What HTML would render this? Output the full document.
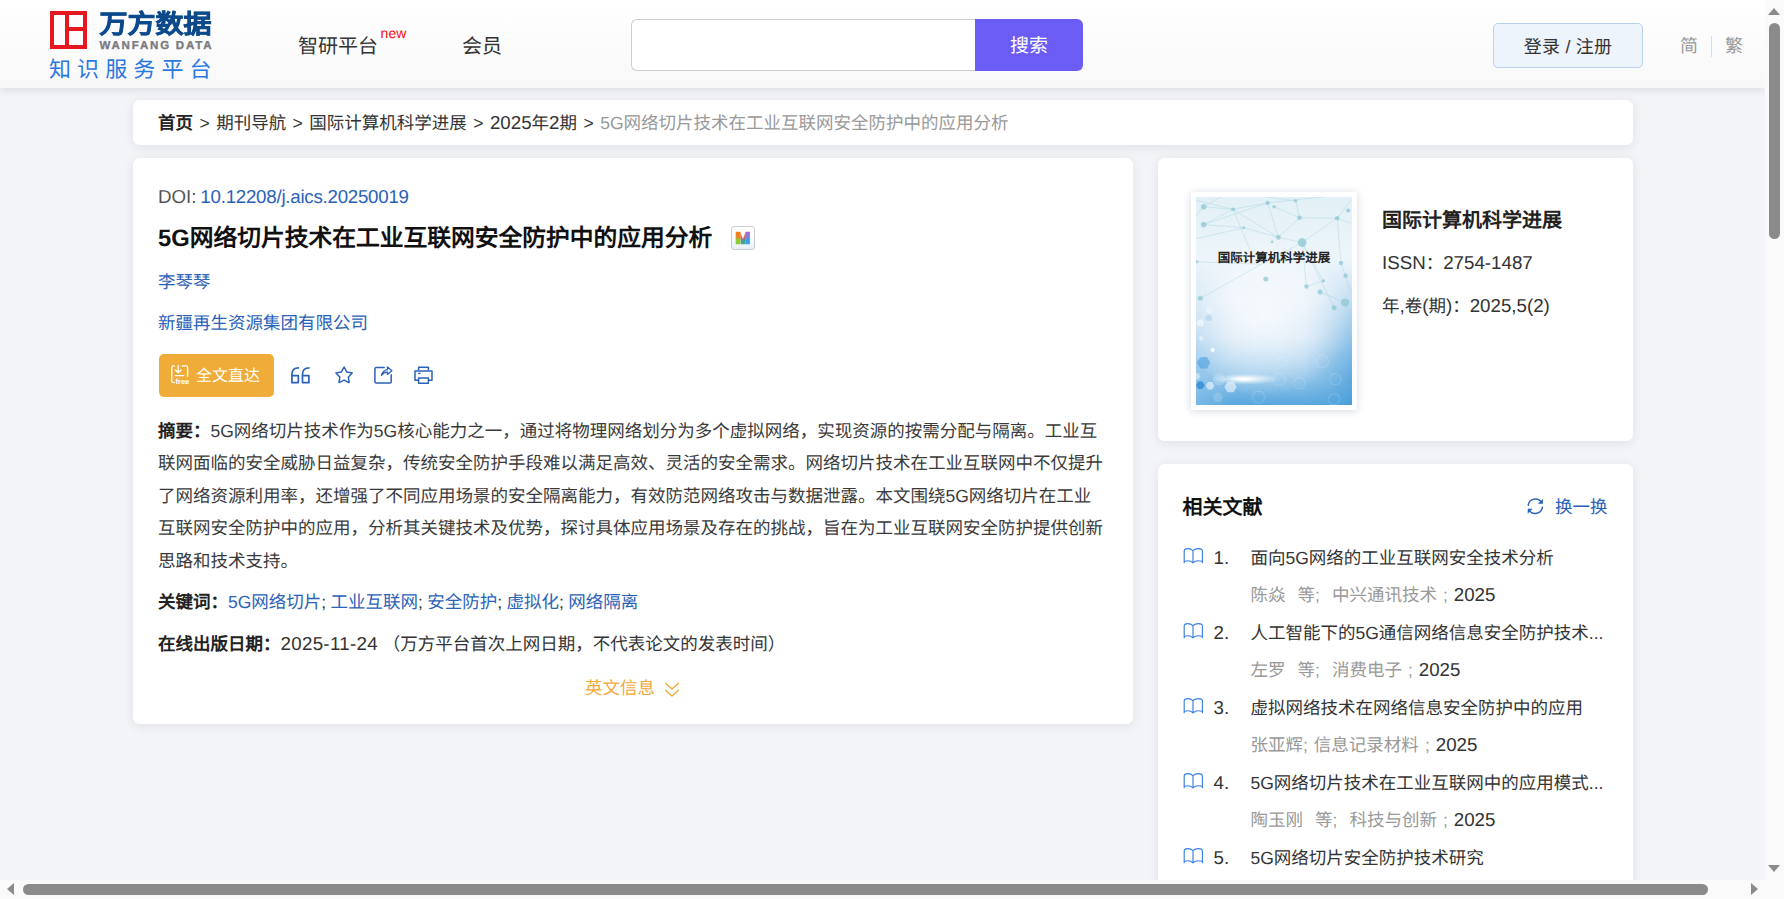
<!DOCTYPE html>
<html lang="zh-CN">
<head>
<meta charset="utf-8">
<title>5G网络切片技术在工业互联网安全防护中的应用分析</title>
<style>
html,body{margin:0;padding:0;}
body{width:1784px;height:899px;overflow:hidden;position:relative;background:#f3f4f8;font-family:"Liberation Sans",sans-serif;color:#222;font-size:17.5px;text-rendering:geometricPrecision;}
*{box-sizing:border-box;}
.abs{position:absolute;white-space:nowrap;}
a{text-decoration:none;color:inherit;}
/* header */
#header{position:absolute;left:0;top:0;width:1765px;height:88px;background:linear-gradient(#ffffff,#f8f8f8);box-shadow:0 2px 8px rgba(0,0,0,.10);}
#logo-sq{position:absolute;left:50px;top:11px;width:37px;height:38px;border:4px solid #e8161f;}
#logo-sq i{position:absolute;background:#e8161f;display:block;}
#logo-cn{left:99.5px;top:9.4px;font-size:28px;line-height:32px;font-weight:900;color:#0c4a8c;letter-spacing:0px;-webkit-text-stroke:.7px #0c4a8c;transform:scaleY(.93);transform-origin:0 50%;}
#logo-en{left:99.5px;top:38.8px;font-size:11.5px;line-height:14px;font-weight:bold;color:#7a7b7e;letter-spacing:1.8px;-webkit-text-stroke:.35px #7a7b7e;}
#logo-sub{left:49px;top:56.6px;font-size:22px;line-height:26px;color:#2a78e2;letter-spacing:6.1px;}
.nav{font-size:20px;line-height:28px;color:#333;top:32.5px;}
#new{left:380.6px;top:25px;font-size:14px;line-height:16px;color:#f80c10;}
#sbox{position:absolute;left:631.4px;top:19px;width:344.6px;height:52px;border:1px solid #cdcdcd;border-right:none;border-radius:6px 0 0 6px;background:#fff;}
#sbtn{position:absolute;left:975px;top:19px;width:108px;height:52px;border-radius:0 6px 6px 0;background:#6a5cf5;color:#fff;font-size:19px;line-height:56px;text-align:center;}
#login{position:absolute;left:1493px;top:23px;width:150px;height:45px;border:1px solid #b9d0ee;border-radius:5px;background:#eef4fc;color:#333;font-size:18px;line-height:46px;text-align:center;letter-spacing:.2px;}
.lang{font-size:18px;line-height:24px;color:#999;top:34px;}
#langsep{position:absolute;left:1711px;top:36px;width:1px;height:21px;background:#ddd;}
/* cards */
.card{position:absolute;background:#fff;border-radius:6.5px;box-shadow:0 2px 11px rgba(30,35,50,.085);}
#crumb{left:133px;top:100px;width:1500px;height:45px;}
#crumb .abs{left:25px;top:10px;font-size:17.5px;line-height:25px;color:#333;word-spacing:1.6px;}
#crumb b{color:#222;}
#crumb .cur{color:#999;}
#main{left:133px;top:158px;width:1000px;height:566px;}
#side1{left:1158px;top:158px;width:475px;height:283px;}
#side2{left:1158px;top:463.7px;width:475px;height:440px;}
.blue{color:#2a62b8;}
/* main content (coordinates relative to page via #main offset) */
.l{font-size:107%;}
#main .abs{left:25px;}
#doi{top:25px;line-height:28px;color:#555;}
#title{top:63.3px;font-size:23.75px;line-height:36px;font-weight:bold;color:#111;}
#micon{position:absolute;left:598.3px;top:68.3px;width:23.6px;height:23.6px;border:1.5px solid #cbcccf;border-radius:3px;background:linear-gradient(#fff 30%,#e9f0fa);overflow:hidden;}
#author{top:109.7px;line-height:28px;}
#org{top:150.7px;line-height:28px;}
#ftbtn{position:absolute;left:26px;top:196px;width:115px;height:43px;border-radius:5px;background:#f0ac38;}
#ftbtn span{position:absolute;left:37px;top:10.5px;font-size:16px;line-height:24px;color:#fff;white-space:nowrap;}
.ico{position:absolute;}
#abs-t div{height:32.5px;line-height:32.5px;white-space:nowrap;width:950px;color:#3a3a3a;}
#abs-t{top:256.8px;}
#main b{color:#222;}
#kw{top:430px;line-height:28px;color:#333;word-spacing:-.5px;}
#pub{top:472px;line-height:28px;color:#333;}
#eng{top:516px;line-height:28px;color:#f0a93a;}


/* side 1 */
#cover{position:absolute;left:33px;top:34px;width:166px;height:218px;background:#fff;box-shadow:0 1px 8px rgba(60,80,120,.22);}
#cover svg{position:absolute;left:5px;top:5px;}
#cover-t{position:absolute;left:5px;top:57.3px;width:156px;text-align:center;font-size:12.5px;line-height:18px;font-weight:bold;color:#222;white-space:nowrap;letter-spacing:0;}
#jt{left:224px;top:47.8px;font-size:20px;line-height:30px;font-weight:bold;color:#222;}
#issn{left:224px;top:91px;line-height:28px;color:#333;}
#vol{left:224px;top:133.7px;line-height:28px;color:#333;}
/* side 2 */
#rel-h{left:24.5px;top:29.7px;font-size:20px;line-height:30px;font-weight:bold;color:#111;}
#rel-r{left:397px;top:29px;line-height:28px;}
.ri{position:absolute;left:0;width:475px;height:75px;}
.ri .n{left:55.5px;top:1px;line-height:30px;color:#333;}
.ri .t{left:92.5px;top:1px;line-height:30px;color:#333;width:358px;overflow:hidden;}
.ri .s{left:92.5px;top:37.8px;line-height:30px;color:#999;word-spacing:1.15px;}
.ri .s em{font-style:normal;color:#333;}
.ri svg{position:absolute;left:24px;top:4px;}
/* scrollbars */
#vsb{position:absolute;left:1765px;top:0;width:19px;height:899px;background:#fafafa;}
#hsb{position:absolute;left:0;top:880px;width:1784px;height:19px;background:#fafafa;}
.thumb{position:absolute;background:#8b8b8b;border-radius:6px;}
.tri{position:absolute;width:0;height:0;}
</style>
</head>
<body>
<div id="header">
  <div id="logo-sq"><i style="left:11px;top:0;width:4px;height:30px"></i><i style="left:15px;top:12px;width:14px;height:4px"></i></div>
  <div class="abs" id="logo-cn">万方数据</div>
  <div class="abs" id="logo-en">WANFANG DATA</div>
  <div class="abs" id="logo-sub">知识服务平台</div>
  <div class="abs nav" style="left:298px">智研平台</div>
  <div class="abs" id="new">new</div>
  <div class="abs nav" style="left:462px">会员</div>
  <div id="sbox"></div>
  <div id="sbtn">搜索</div>
  <div id="login">登录 / 注册</div>
  <div class="abs lang" style="left:1680px">简</div>
  <div id="langsep"></div>
  <div class="abs lang" style="left:1725px">繁</div>
</div>

<div class="card" id="crumb">
  <div class="abs"><b>首页</b> &gt; 期刊导航 &gt; 国际计算机科学进展 &gt; <span class="l">2025</span>年<span class="l">2</span>期 &gt; <span class="cur">5G网络切片技术在工业互联网安全防护中的应用分析</span></div>
</div>

<div class="card" id="main">
  <div class="abs" id="doi"><span class="l">DOI:</span> <span class="blue l" style="margin-left:-1px;letter-spacing:-.25px">10.12208/j.aics.20250019</span></div>
  <div class="abs" id="title">5G网络切片技术在工业互联网安全防护中的应用分析</div>
  <div id="micon"><svg width="21" height="21" viewBox="732.1 227.5 21 21" style="position:absolute;left:0;top:0">
    <defs><linearGradient id="m1" x1="0" y1="0" x2="0" y2="1"><stop offset="0" stop-color="#f47a18"/><stop offset=".5" stop-color="#e48a2a"/><stop offset=".62" stop-color="#8fcf2a"/><stop offset="1" stop-color="#8cc63a"/></linearGradient>
    <linearGradient id="m2" x1="0" y1="0" x2="0" y2="1"><stop offset="0" stop-color="#b45fd0"/><stop offset=".45" stop-color="#7a86dc"/><stop offset=".6" stop-color="#3a9be6"/><stop offset="1" stop-color="#3a9be6"/></linearGradient>
    <linearGradient id="m3" x1="0" y1="0" x2="0" y2="1"><stop offset="0" stop-color="#f08a3a"/><stop offset=".5" stop-color="#d8605a"/><stop offset=".7" stop-color="#4a9a96"/><stop offset="1" stop-color="#4aa39a"/></linearGradient></defs>
    <path d="M735.8 232.2H740.6V244.8H735.8Z" fill="url(#m1)"/>
    <path d="M745.6 232.2H750V244.8H745.6Z" fill="url(#m2)"/>
    <path d="M740.2 232.2L743 239.6L745.8 232.2L746 236L745.6 244.8H741V244.8L740.4 236Z" fill="url(#m3)"/>
  </svg></div>
  <div class="abs blue" id="author">李琴琴</div>
  <div class="abs blue" id="org">新疆再生资源集团有限公司</div>
  <div id="ftbtn"><span>全文直达</span></div>

  <svg class="ico" style="left:36px;top:205px" width="24" height="24" viewBox="169 363 24 24" fill="none" stroke="#fff" stroke-width="1.3" stroke-linecap="round" stroke-linejoin="round">
    <path d="M174.5 365.8H173.4Q171.8 365.8 171.8 367.4V381Q171.8 382.6 173.4 382.6H174.3"/>
    <path d="M182 365.8H186Q187.6 365.8 187.6 367.4V376.3"/>
    <path d="M178.2 365.5V372.6M175.3 370L178.2 372.8L181.1 370"/>
    <path d="M175.3 375.6H183.8"/>
    <text x="175.6" y="384.2" font-family="Liberation Sans, sans-serif" font-size="7.6" font-weight="bold" fill="#fff" stroke="none" letter-spacing="-.1">free</text>
  </svg>
  <svg class="ico" style="left:156px;top:207px" width="22" height="20" viewBox="289 365 22 20" fill="none" stroke="#2a62b8" stroke-width="1.7" stroke-linejoin="round">
    <path d="M299 367.8Q291.9 367.6 291.9 374.4V382.6H298.3V375.6H291.9"/>
    <path d="M309.6 367.8Q302.5 367.6 302.5 374.4V382.6H308.9V375.6H302.5"/>
  </svg>
  <svg class="ico" style="left:200px;top:206px" width="22" height="22" viewBox="333 364 22 22" fill="none" stroke="#2a62b8" stroke-width="1.5" stroke-linejoin="round">
    <path d="M344.1 367L346.75 371.96L352.28 372.94L348.38 376.99L349.16 382.56L344.1 380.1L339.04 382.56L339.82 376.99L335.92 372.94L341.45 371.96Z"/>
  </svg>
  <svg class="ico" style="left:239px;top:206px" width="24" height="22" viewBox="372 364 24 22" fill="none" stroke="#2a62b8" stroke-width="1.5" stroke-linejoin="round" stroke-linecap="round">
    <path d="M384.2 367.6H376.4Q374.9 367.6 374.9 369.1V381.4Q374.9 382.9 376.4 382.9H390.2Q391.2 382.9 391.2 381.9V374.8"/>
    <path d="M381.4 375.3Q383 370.3 387.4 369.6V367L391.9 370.7L387.4 374.4V372.1Q384 372 381.4 375.3Z" stroke-width="1.3"/>
  </svg>
  <svg class="ico" style="left:279px;top:206px" width="24" height="22" viewBox="412 364 24 22" fill="none" stroke="#2a62b8" stroke-width="1.5" stroke-linejoin="round">
    <path d="M418.6 370.3V367.2H428.4V370.3"/>
    <path d="M418.6 380.2H415Q415 380.2 415 380.2V370.9H432V380.2H428.4"/>
    <path d="M418.6 377.9H428.4V383.2H418.6Z"/>
    <path d="M418.2 373.4H420.6" stroke-width="1.4"/>
  </svg>
  <svg class="ico" style="left:530px;top:522px" width="18" height="18" viewBox="663 680 18 18" fill="none" stroke="#f0a93a" stroke-width="1.4" stroke-linecap="round" stroke-linejoin="round">
    <path d="M665.6 683.2L672 689L678.4 683.2M665.6 690.3L672 696.1L678.4 690.3"/>
  </svg>
  <div class="abs" id="abs-t">
    <div><b>摘要：</b>5G网络切片技术作为5G核心能力之一，通过将物理网络划分为多个虚拟网络，实现资源的按需分配与隔离。工业互</div>
    <div>联网面临的安全威胁日益复杂，传统安全防护手段难以满足高效、灵活的安全需求。网络切片技术在工业互联网中不仅提升</div>
    <div>了网络资源利用率，还增强了不同应用场景的安全隔离能力，有效防范网络攻击与数据泄露。本文围绕5G网络切片在工业</div>
    <div>互联网安全防护中的应用，分析其关键技术及优势，探讨具体应用场景及存在的挑战，旨在为工业互联网安全防护提供创新</div>
    <div>思路和技术支持。</div>
  </div>
  <div class="abs" id="kw"><b>关键词：</b><span class="blue">5G网络切片</span>; <span class="blue">工业互联网</span>; <span class="blue">安全防护</span>; <span class="blue">虚拟化</span>; <span class="blue">网络隔离</span></div>
  <div class="abs" id="pub"><b>在线出版日期：</b><span class="l" style="letter-spacing:.3px">2025-11-24</span> （万方平台首次上网日期，不代表论文的发表时间）</div>
  <div class="abs" id="eng" style="left:452px">英文信息</div>
</div>

<div class="card" id="side1">
  <div id="cover">
    <svg width="156" height="208" viewBox="0 0 156 208"><defs>
      <linearGradient id="cg" x1="0" y1="0" x2="0" y2="1"><stop offset="0" stop-color="#e2f0f6"/><stop offset=".3" stop-color="#edf5fa"/><stop offset=".5" stop-color="#e6f0f9"/><stop offset=".68" stop-color="#cfe4f5"/><stop offset=".85" stop-color="#9ccaec"/><stop offset="1" stop-color="#58a7dd"/></linearGradient>
      <linearGradient id="ch" x1="0" y1="0" x2="1" y2="0"><stop offset="0" stop-color="#8fc4ea" stop-opacity=".55"/><stop offset=".25" stop-color="#8fc4ea" stop-opacity="0"/><stop offset=".7" stop-color="#5aa9df" stop-opacity="0"/><stop offset="1" stop-color="#3f98d8" stop-opacity=".6"/></linearGradient>
      <linearGradient id="cm" x1="0" y1="0" x2="0" y2="1"><stop offset="0" stop-color="#fff" stop-opacity="1"/><stop offset=".42" stop-color="#fff" stop-opacity="1"/><stop offset=".5" stop-color="#fff" stop-opacity="0"/></linearGradient>
      <linearGradient id="cmg" x1="0" y1="0" x2="0" y2="1"><stop offset=".3" stop-color="#000"/><stop offset=".85" stop-color="#fff"/></linearGradient><mask id="cmask"><rect width="156" height="208" fill="url(#cmg)"/></mask>
      <radialGradient id="cw" cx=".46" cy=".5" r=".5"><stop offset="0" stop-color="#fff" stop-opacity=".75"/><stop offset=".5" stop-color="#fff" stop-opacity=".4"/><stop offset="1" stop-color="#fff" stop-opacity="0"/></radialGradient>
      <radialGradient id="cs" cx=".5" cy=".5" r=".5"><stop offset="0" stop-color="#fff" stop-opacity="1"/><stop offset="1" stop-color="#fff" stop-opacity="0"/></radialGradient>
      <clipPath id="cc"><rect width="156" height="208"/></clipPath>
    </defs>
    <g clip-path="url(#cc)">
    <rect width="156" height="208" fill="url(#cg)"/>
    <rect width="156" height="208" fill="url(#ch)" mask="url(#cmask)"/>
    <ellipse cx="74" cy="120" rx="86" ry="80" fill="url(#cw)"/>
    <g stroke="#8cc4cf" stroke-width=".55" opacity=".55" fill="none"><path d="M7.7 9.7L37.1 12.3"/><path d="M37.1 12.3L71.6 5.9"/><path d="M37.1 12.3L7.7 27.6"/><path d="M7.7 27.6L71.6 5.9"/><path d="M37.1 12.3L53.7 51.9"/><path d="M0.0 3.3L37.1 12.3"/><path d="M37.1 12.3L82.4 40.4"/><path d="M78.0 9.7L103.6 20.7"/><path d="M99.7 3.8L103.6 20.7"/><path d="M103.6 20.7L141.2 21.2"/><path d="M103.6 20.7L82.4 40.4"/><path d="M82.4 40.4L106.1 45.5"/><path d="M106.1 45.5L141.2 21.2"/><path d="M106.1 45.5L110.5 89.5"/><path d="M110.5 89.5L127.4 83.9"/><path d="M4.3 101.3L65.2 67.3"/><path d="M0.0 64.7L65.2 67.3"/><path d="M65.2 67.3L106.1 45.5"/><path d="M71.6 5.9L82.4 40.4"/><path d="M71.6 5.9L126.6 0.0"/><path d="M141.2 21.2L155.2 3.3"/><path d="M141.2 21.2L145.0 66.0"/><path d="M106.1 45.5L138.1 110.7"/><path d="M145.0 66.0L155.2 95.4"/><path d="M99.7 3.8L70.3 0.0"/><path d="M7.7 9.7L0.0 18.7"/><path d="M7.7 9.7L24.3 0.0"/><path d="M124.0 94.9L149.1 105.6"/><path d="M127.4 83.9L106.1 45.5"/><path d="M47.8 30.7L7.7 27.6"/><path d="M47.8 30.7L82.4 40.4"/><path d="M141.2 21.2L155.2 26.3"/><path d="M0.0 41.7L47.8 30.7"/></g>
    <g fill="#8fc8d4" opacity=".75"><circle cx="7.7" cy="9.7" r="2.8"/><circle cx="37.1" cy="12.3" r="1.9"/><circle cx="7.7" cy="27.6" r="2.8"/><circle cx="71.6" cy="5.9" r="2.1"/><circle cx="78.0" cy="9.7" r="1.7"/><circle cx="99.7" cy="3.8" r="1.7"/><circle cx="103.6" cy="20.7" r="2.3"/><circle cx="141.2" cy="21.2" r="2.3"/><circle cx="82.4" cy="40.4" r="2.3"/><circle cx="106.1" cy="45.5" r="4.4"/><circle cx="69.8" cy="82.1" r="2.5"/><circle cx="110.5" cy="89.5" r="2.2"/><circle cx="124.0" cy="94.9" r="2.5"/><circle cx="127.4" cy="83.9" r="1.7"/><circle cx="149.1" cy="105.6" r="4.0"/><circle cx="138.1" cy="110.7" r="2.5"/><circle cx="4.3" cy="101.3" r="2.5"/><circle cx="145.0" cy="66.0" r="2.3"/><circle cx="149.6" cy="78.8" r="2.3"/><circle cx="76.2" cy="44.8" r="1.4"/><circle cx="47.8" cy="30.7" r="1.4"/><circle cx="152.2" cy="13.6" r="2.1"/><circle cx="1.0" cy="64.7" r="1.5"/></g>
    <path d="M8.4 126.1L6.4 129.6L2.3 129.6L0.3 126.1L2.3 122.5L6.4 122.5Z" fill="#fff" opacity="0.55"/><path d="M16.4 121.0L14.6 124.1L11.0 124.1L9.2 121.0L11.0 117.9L14.6 117.9Z" fill="#9fc8ee" opacity="0.45"/><path d="M16.6 113.3L15.0 116.2L11.6 116.2L10.0 113.3L11.6 110.4L15.0 110.4Z" fill="#fff" opacity="0.35"/><path d="M7.4 141.4L6.3 143.4L4.0 143.4L2.8 141.4L4.0 139.4L6.3 139.4Z" fill="#fff" opacity="0.5"/><path d="M14.3 165.7L11.0 171.5L4.3 171.5L1.0 165.7L4.3 160.0L11.0 160.0Z" fill="#3f9adf" opacity="0.55"/><path d="M18.9 152.9L17.8 154.9L15.5 154.9L14.3 152.9L15.5 150.9L17.8 150.9Z" fill="#fff" opacity="0.8"/><path d="M8.7 188.2L6.5 192.0L2.2 192.0L0.0 188.2L2.2 184.5L6.5 184.5Z" fill="#2a86d6" opacity="0.75"/><path d="M18.4 188.7L16.2 192.5L11.9 192.5L9.7 188.7L11.9 185.0L16.2 185.0Z" fill="#fff" opacity="0.55"/><path d="M29.7 182.4L26.3 188.1L19.7 188.1L16.4 182.4L19.7 176.6L26.3 176.6Z" fill="#cfe4f6" opacity="0.35"/><path d="M40.7 190.0L37.6 195.3L31.5 195.3L28.4 190.0L31.5 184.7L37.6 184.7Z" fill="#fff" opacity="0.55"/><path d="M4.3 179.3L2.6 182.4L-1.0 182.4L-2.8 179.3L-1.0 176.2L2.6 176.2Z" fill="#fff" opacity="0.45"/><path d="M26.9 200.3L24.3 204.7L19.2 204.7L16.6 200.3L19.2 195.8L24.3 195.8Z" fill="#b8d8f2" opacity="0.35"/><path d="M9.0 156.8L6.4 161.2L1.3 161.2L-1.3 156.8L1.3 152.3L6.4 152.3Z" fill="#bcdaf4" opacity="0.35"/><g fill="none" stroke="#fff" stroke-width=".5" opacity=".35"><path d="M89.8 182.4L86.4 188.1L79.8 188.1L76.5 182.4L79.8 176.6L86.4 176.6Z"/><path d="M69.3 200.3L66.0 206.0L59.3 206.0L56.0 200.3L59.3 194.5L66.0 194.5Z"/><path d="M109.7 186.2L106.6 191.5L100.5 191.5L97.4 186.2L100.5 180.9L106.6 180.9Z"/><path d="M133.2 164.5L129.9 170.2L123.3 170.2L119.9 164.5L123.3 158.7L129.9 158.7Z"/><path d="M145.5 182.4L142.5 187.7L136.3 187.7L133.2 182.4L136.3 177.0L142.5 177.0Z"/><path d="M144.2 202.3L141.2 207.6L135.0 207.6L132.0 202.3L135.0 197.0L141.2 197.0Z"/><path d="M90.8 164.5L88.2 168.9L83.1 168.9L80.6 164.5L83.1 160.0L88.2 160.0Z"/></g>
    <ellipse cx="50" cy="182" rx="34" ry="5.5" fill="url(#cs)"/>
    <ellipse cx="46" cy="182" rx="14" ry="3" fill="url(#cs)"/>
    </g>
    </svg>
    <div id="cover-t">国际计算机科学进展</div>
  </div>
  <div class="abs" id="jt">国际计算机科学进展</div>
  <div class="abs" id="issn"><span class="l">ISSN</span>：<span class="l">2754-1487</span></div>
  <div class="abs" id="vol">年<span class="l">,</span>卷<span class="l">(</span>期<span class="l">)</span>：<span class="l">2025,5(2)</span></div>
</div>

<div class="card" id="side2">
  <div class="abs" id="rel-h">相关文献</div>
  <svg class="ico" style="left:367px;top:32.3px" width="20" height="20" viewBox="1525 496 20 20" fill="none" stroke="#2a62b8" stroke-width="1.4" stroke-linecap="round">
    <path d="M1528.2 505.3A7.2 7.2 0 0 1 1541.6 502.6"/><path d="M1542.4 507.1A7.2 7.2 0 0 1 1529 509.8"/>
    <path d="M1542.6 499.6V503.4H1538.8Z" fill="#2a62b8" stroke-width=".6" stroke-linejoin="round"/><path d="M1528 512.8V509H1531.8Z" fill="#2a62b8" stroke-width=".6" stroke-linejoin="round"/>
  </svg>
  <div class="abs blue" id="rel-r">换一换</div>
  <div class="ri" style="top:78.3px"><svg width="22" height="19" viewBox="1182 546 22 19" fill="none" stroke="#3a80e6" stroke-width="1.15" stroke-linejoin="round"><path d="M1184.2 563.2V551Q1184.2 548.6 1187.6 548.6Q1191 548.6 1193 550.7V563M1193 550.7Q1195 548.6 1198.6 548.6Q1202.4 548.6 1202.4 551V563.2M1184.2 561.5Q1189.6 559.4 1193 562.9Q1196.4 559.4 1202.4 561.5"/></svg><div class="abs n l">1.</div><div class="abs t">面向5G网络的工业互联网安全技术分析</div><div class="abs s">陈焱&nbsp; 等;&nbsp; 中兴通讯技术 ; <em class="l">2025</em></div></div>
  <div class="ri" style="top:153.3px"><svg width="22" height="19" viewBox="1182 546 22 19" fill="none" stroke="#3a80e6" stroke-width="1.15" stroke-linejoin="round"><path d="M1184.2 563.2V551Q1184.2 548.6 1187.6 548.6Q1191 548.6 1193 550.7V563M1193 550.7Q1195 548.6 1198.6 548.6Q1202.4 548.6 1202.4 551V563.2M1184.2 561.5Q1189.6 559.4 1193 562.9Q1196.4 559.4 1202.4 561.5"/></svg><div class="abs n l">2.</div><div class="abs t">人工智能下的5G通信网络信息安全防护技术...</div><div class="abs s">左罗&nbsp; 等;&nbsp; 消费电子 ; <em class="l">2025</em></div></div>
  <div class="ri" style="top:228.3px"><svg width="22" height="19" viewBox="1182 546 22 19" fill="none" stroke="#3a80e6" stroke-width="1.15" stroke-linejoin="round"><path d="M1184.2 563.2V551Q1184.2 548.6 1187.6 548.6Q1191 548.6 1193 550.7V563M1193 550.7Q1195 548.6 1198.6 548.6Q1202.4 548.6 1202.4 551V563.2M1184.2 561.5Q1189.6 559.4 1193 562.9Q1196.4 559.4 1202.4 561.5"/></svg><div class="abs n l">3.</div><div class="abs t">虚拟网络技术在网络信息安全防护中的应用</div><div class="abs s">张亚辉; 信息记录材料 ; <em class="l">2025</em></div></div>
  <div class="ri" style="top:303.3px"><svg width="22" height="19" viewBox="1182 546 22 19" fill="none" stroke="#3a80e6" stroke-width="1.15" stroke-linejoin="round"><path d="M1184.2 563.2V551Q1184.2 548.6 1187.6 548.6Q1191 548.6 1193 550.7V563M1193 550.7Q1195 548.6 1198.6 548.6Q1202.4 548.6 1202.4 551V563.2M1184.2 561.5Q1189.6 559.4 1193 562.9Q1196.4 559.4 1202.4 561.5"/></svg><div class="abs n l">4.</div><div class="abs t">5G网络切片技术在工业互联网中的应用模式...</div><div class="abs s">陶玉刚&nbsp; 等;&nbsp; 科技与创新 ; <em class="l">2025</em></div></div>
  <div class="ri" style="top:378.3px"><svg width="22" height="19" viewBox="1182 546 22 19" fill="none" stroke="#3a80e6" stroke-width="1.15" stroke-linejoin="round"><path d="M1184.2 563.2V551Q1184.2 548.6 1187.6 548.6Q1191 548.6 1193 550.7V563M1193 550.7Q1195 548.6 1198.6 548.6Q1202.4 548.6 1202.4 551V563.2M1184.2 561.5Q1189.6 559.4 1193 562.9Q1196.4 559.4 1202.4 561.5"/></svg><div class="abs n l">5.</div><div class="abs t">5G网络切片安全防护技术研究</div></div>
</div>

<div id="vsb">
  <div class="tri" style="left:3px;top:8px;border-left:6.5px solid transparent;border-right:6.5px solid transparent;border-bottom:7px solid #8b8b8b"></div>
  <div class="thumb" style="left:4px;top:23px;width:11px;height:216px"></div>
  <div class="tri" style="left:3px;top:865px;border-left:6.5px solid transparent;border-right:6.5px solid transparent;border-top:7px solid #8b8b8b"></div>
</div>
<div id="hsb">
  <div class="tri" style="left:7px;top:3px;border-top:6.5px solid transparent;border-bottom:6.5px solid transparent;border-right:7px solid #8b8b8b"></div>
  <div class="thumb" style="left:23px;top:4px;width:1685px;height:11px"></div>
  <div class="tri" style="left:1751px;top:3px;border-top:6.5px solid transparent;border-bottom:6.5px solid transparent;border-left:7px solid #8b8b8b"></div>
  <div style="position:absolute;left:1765px;top:0;width:19px;height:19px;background:#fafafa"></div>
</div>
</body>
</html>
